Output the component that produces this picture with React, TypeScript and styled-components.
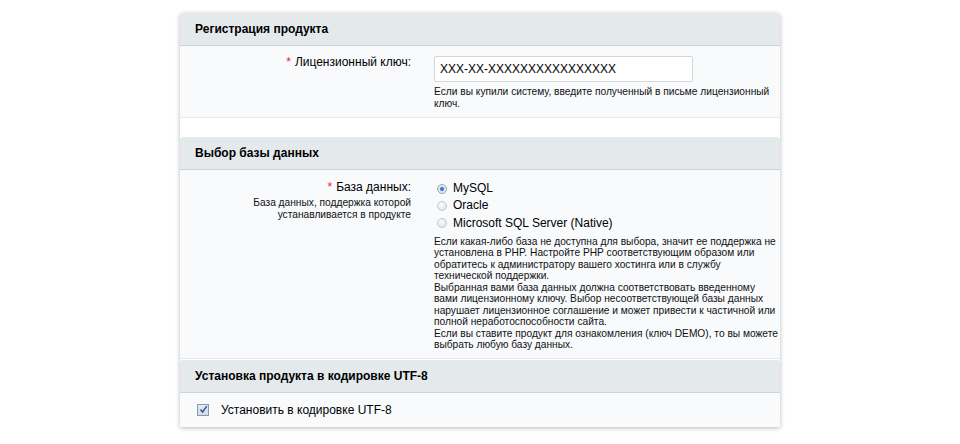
import React from "react";
import styled, { createGlobalStyle } from "styled-components";

const GlobalStyle = createGlobalStyle`
  html, body {
    margin: 0;
    padding: 0;
    background: #ffffff;
    font-family: "Liberation Sans", Arial, sans-serif;
    color: #000;
  }
`;

const Page = styled.div`
  padding-top: 13px;
  height: 444px;
  box-sizing: border-box;
`;

const Panel = styled.div`
  width: 600px;
  margin: 0 auto;
  background: #ffffff;
  box-shadow: 0 1px 5px rgba(0, 0, 0, 0.28);
  border-radius: 3px;
`;

const Header = styled.div`
  background: #e4e9ec;
  border-bottom: 1px solid #cdd4d8;
  border-radius: 3px 3px 0 0;
  padding: 9px 15px 8px;
  font-size: 12px;
  line-height: 15px;
  font-weight: bold;
`;

const Row = styled.div<{ $pad?: string }>`
  display: grid;
  grid-template-columns: 231px 1fr;
  column-gap: 23px;
  background: #f8fafc;
  border-bottom: 1px solid #e6eaed;
  padding: ${(p) => p.$pad || "10px 0 8px"};
`;

const Spacer = styled.div<{ $h: number }>`
  height: ${(p) => p.$h}px;
`;

const Label = styled.div<{ $shift?: number }>`
  text-align: right;
  font-size: 12px;
  line-height: 16px;
  margin-top: ${(p) => p.$shift ?? 0}px;
`;

const Star = styled.span`
  color: #e3262b;
  margin-right: 4px;
`;

const SubLabel = styled.div`
  text-align: right;
  font-size: 10.2px;
  line-height: 11.6px;
  margin-top: 2px;
  color: #111;
`;

const Value = styled.div`
  width: 346px;
`;

const KeyInput = styled.input`
  display: block;
  box-sizing: border-box;
  width: 259px;
  height: 26px;
  border: 1px solid #d3d7da;
  border-radius: 2px;
  background: #fff;
  padding: 0 5px;
  font-family: "Liberation Sans", Arial, sans-serif;
  font-size: 12px;
  color: #000;
  outline: none;
`;

const Hint = styled.div<{ $top?: number }>`
  font-size: 10.2px;
  line-height: 11.5px;
  margin-top: ${(p) => p.$top ?? 4}px;
  color: #111;
`;

const RadioList = styled.div`
  display: flex;
  flex-direction: column;
  margin-top: 1px;
`;

const RadioItem = styled.label`
  display: flex;
  align-items: center;
  gap: 6px;
  font-size: 12px;
  line-height: 17.3px;
  padding-left: 3px;
`;

const RadioDot = styled.span<{ $on?: boolean }>`
  box-sizing: border-box;
  width: 10px;
  height: 10px;
  border-radius: 50%;
  border: 1px solid ${(p) => (p.$on ? "#9aa6b2" : "#c4c8cc")};
  background: ${(p) =>
    p.$on
      ? "radial-gradient(circle, #2f6fbf 0, #4a8ad8 1.6px, #dfe6ee 2.6px, #eef1f4 100%)"
      : "radial-gradient(circle at 40% 35%, #fbfbfb 0, #e9eaeb 60%, #dcdedf 100%)"};
`;

const CheckRow = styled.div`
  background: #f8fafc;
  display: flex;
  align-items: center;
  gap: 12px;
  padding: 9px 17px 9px;
  font-size: 12px;
  line-height: 16px;
  border-radius: 0 0 3px 3px;
`;

const CheckBox = styled.span`
  box-sizing: border-box;
  width: 12px;
  height: 12px;
  border: 1px solid #8e99a6;
  background: linear-gradient(#e4e9ef, #d3dbe4);
  display: flex;
  align-items: center;
  justify-content: center;
`;

const radios = ["MySQL", "Oracle", "Microsoft SQL Server (Native)"];

export default function App() {
  return (
    <>
      <GlobalStyle />
      <Page>
        <Panel>
          <Header>Регистрация продукта</Header>
          <Row $pad="10px 0 8px">
            <Label $shift={-2}>
              <Star>*</Star>Лицензионный ключ:
            </Label>
            <Value>
              <KeyInput defaultValue="XXX-XX-XXXXXXXXXXXXXXXX" />
              <Hint $top={4}>
                Если вы купили систему, введите полученный в письме лицензионный ключ.
              </Hint>
            </Value>
          </Row>
          <Spacer $h={19} />
          <Header>Выбор базы данных</Header>
          <Row $pad="9px 0 7px">
            <div>
              <Label>
                <Star>*</Star>База данных:
              </Label>
              <SubLabel>
                База данных, поддержка которой
                <br />
                устанавливается в продукте
              </SubLabel>
            </div>
            <Value>
              <RadioList>
                {radios.map((r, i) => (
                  <RadioItem key={r}>
                    <RadioDot $on={i === 0} />
                    {r}
                  </RadioItem>
                ))}
              </RadioList>
              <Hint $top={4}>
                Если какая-либо база не доступна для выбора, значит ее поддержка не
                установлена в PHP. Настройте PHP соответствующим образом или обратитесь к
                администратору вашего хостинга или в службу технической поддержки.
                <br />
                Выбранная вами база данных должна соответствовать введенному вами
                лицензионному ключу. Выбор несоответствующей базы данных нарушает
                лицензионное соглашение и может привести к частичной или полной
                неработоспособности сайта.
                <br />
                Если вы ставите продукт для ознакомления (ключ DEMO), то вы можете выбрать
                любую базу данных.
              </Hint>
            </Value>
          </Row>
          <Spacer $h={1} />
          <Header>Установка продукта в кодировке UTF-8</Header>
          <CheckRow>
            <CheckBox>
              <svg width="9" height="9" viewBox="0 0 9 9">
                <path d="M1.5 4.5 L3.6 7 L7.8 1.2" fill="none" stroke="#2a4fa8" strokeWidth="1.4" />
              </svg>
            </CheckBox>
            Установить в кодировке UTF-8
          </CheckRow>
        </Panel>
      </Page>
    </>
  );
}
